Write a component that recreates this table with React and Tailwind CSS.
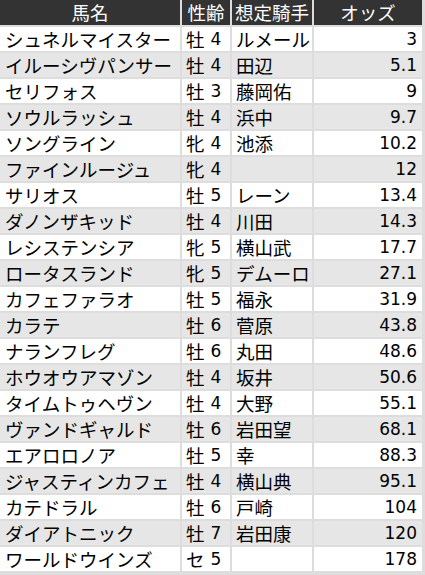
import React from "react";

const rows = [
  ["シュネルマイスター", "牡", "4", "ルメール", "3"],
  ["イルーシヴパンサー", "牡", "4", "田辺", "5.1"],
  ["セリフォス", "牡", "3", "藤岡佑", "9"],
  ["ソウルラッシュ", "牡", "4", "浜中", "9.7"],
  ["ソングライン", "牝", "4", "池添", "10.2"],
  ["ファインルージュ", "牝", "4", "", "12"],
  ["サリオス", "牡", "5", "レーン", "13.4"],
  ["ダノンザキッド", "牡", "4", "川田", "14.3"],
  ["レシステンシア", "牝", "5", "横山武", "17.7"],
  ["ロータスランド", "牝", "5", "デムーロ", "27.1"],
  ["カフェファラオ", "牡", "5", "福永", "31.9"],
  ["カラテ", "牡", "6", "菅原", "43.8"],
  ["ナランフレグ", "牡", "6", "丸田", "48.6"],
  ["ホウオウアマゾン", "牡", "4", "坂井", "50.6"],
  ["タイムトゥヘヴン", "牡", "4", "大野", "55.1"],
  ["ヴァンドギャルド", "牡", "6", "岩田望", "68.1"],
  ["エアロロノア", "牡", "5", "幸", "88.3"],
  ["ジャスティンカフェ", "牡", "4", "横山典", "95.1"],
  ["カテドラル", "牡", "6", "戸崎", "104"],
  ["ダイアトニック", "牡", "7", "岩田康", "120"],
  ["ワールドウインズ", "セ", "5", "", "178"],
];

const jp = { fontFamily: '"Noto Sans CJK JP", sans-serif' };
const num = { fontFamily: '"DejaVu Sans", "Noto Sans CJK JP", sans-serif' };

export default function App() {
  return (
    <div className="w-[425px] h-[575px] bg-[#dddddd] overflow-hidden">
      <div
        className="grid grid-cols-[180px_48px_80px_108px] gap-[2px] w-[422px] text-black"
        style={jp}
      >
        {["馬名", "性齢", "想定騎手", "オッズ"].map((h) => (
          <div
            key={h}
            className="h-[25px] bg-[#333333] text-white text-[18.5px] leading-none flex items-center justify-center whitespace-nowrap"
          >
            {h}
          </div>
        ))}
        {rows.map((r, i) => {
          const bg = i % 2 === 0 ? "bg-white" : "bg-[#e6e6e6]";
          return (
            <React.Fragment key={i}>
              <div className={`${bg} h-[24px] pl-[5px] flex items-center text-[18.5px] leading-none whitespace-nowrap`}>
                {r[0]}
              </div>
              <div className={`${bg} h-[24px] pl-[4px] flex items-center text-[18.5px] leading-none whitespace-nowrap`}>
                <span>{r[1]}</span>
                <span className="ml-[6px] text-[17px]" style={num}>{r[2]}</span>
              </div>
              <div className={`${bg} h-[24px] pl-[4px] flex items-center text-[18.5px] leading-none whitespace-nowrap`}>
                {r[3]}
              </div>
              <div
                className={`${bg} h-[24px] pr-[5px] flex items-center justify-end text-[17px] leading-none whitespace-nowrap`}
                style={num}
              >
                {r[4]}
              </div>
            </React.Fragment>
          );
        })}
      </div>
    </div>
  );
}
